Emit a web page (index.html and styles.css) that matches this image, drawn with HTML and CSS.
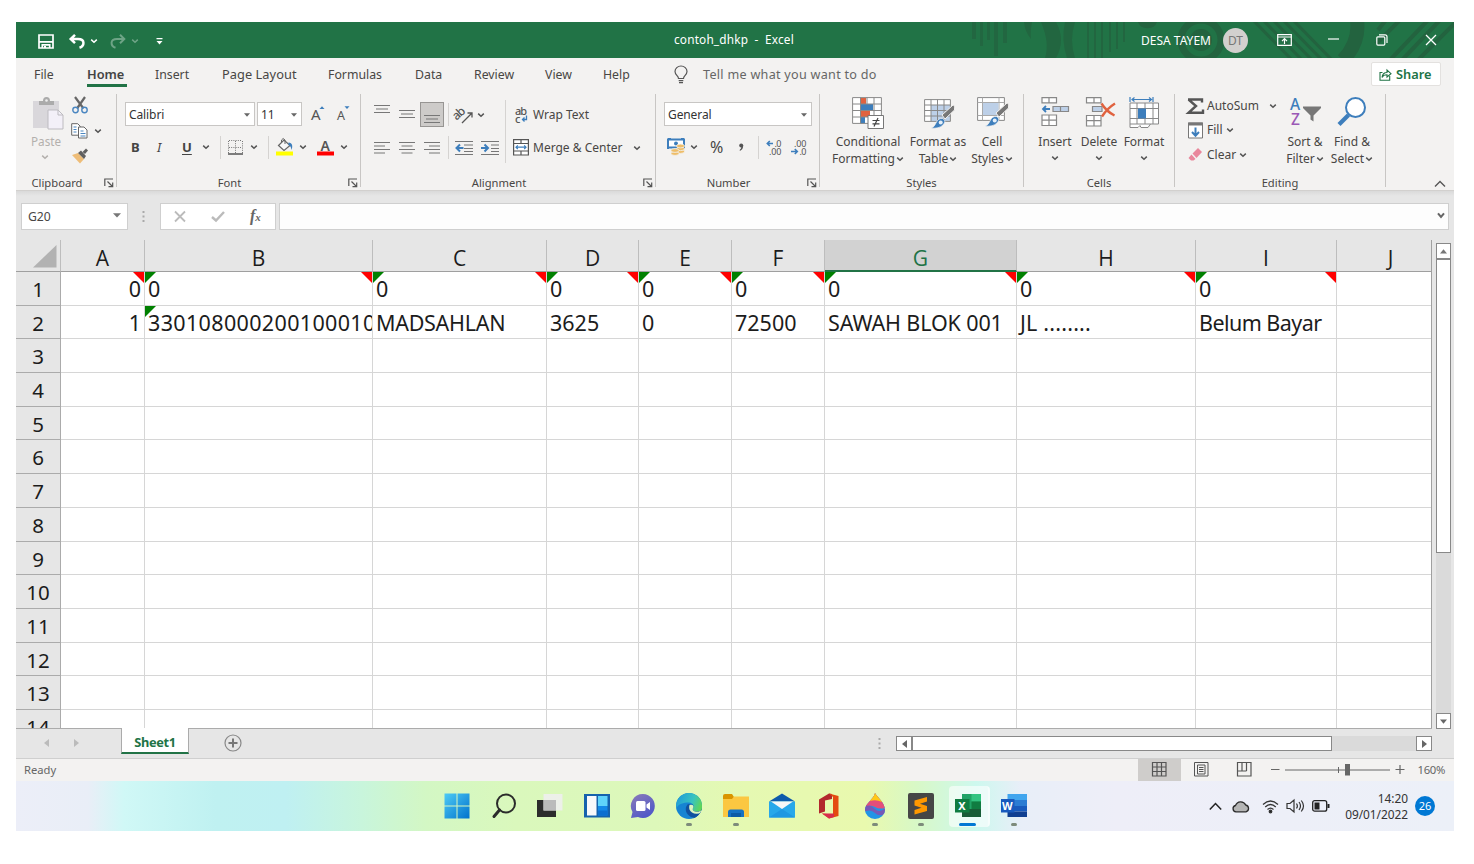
FILE: index.html
```html
<!DOCTYPE html>
<html lang="en">
<head>
<meta charset="utf-8">
<title>contoh_dhkp - Excel</title>
<link rel="stylesheet" href="styles.css">
</head>
<body>
<svg class="defs" aria-hidden="true">
  <symbol id="chev" viewBox="0 0 8 6"><path d="M1.2 1.6 4 4.2 6.8 1.6" fill="none" stroke="currentColor" stroke-width="1.5"/></symbol>
  <symbol id="tri" viewBox="0 0 6 4"><path d="M0 .3h6L3 3.7z" fill="currentColor"/></symbol>
  <symbol id="launch" viewBox="0 0 10 10"><path d="M.8 8V1H9M3.5 3.5 8.5 8.5M8.7 4.5v4.2H4.5" fill="none" stroke="#555" stroke-width="1.2"/></symbol>
</svg>
<div class="window">
  <header class="titlebar">
    <svg class="deco" viewBox="960 0 494 36" fill="#23633f">
      <path d="M972 0h4v17h-4zM980 0h3v24h-3zM987 0h3v18h-3zM994 0h4v34h-4zM1003 0h4v21h-4z" opacity=".7"/>
      <path d="M1024 0h8q-2 10-1 17-6-7-7-17zM1041 0h15q10 18 0 36h-11q5-15-4-36zM1065 0h10q-6 18 0 36h-8q-6-18-2-36zM1087 0h2v36h-2zM1094 0h2v36h-2zM1101 0h2v36h-2zM1109 0h2v30h-2zM1116 0h2v27h-2zM1123 0h2v20h-2z" opacity=".8"/>
      <path d="M1138 0h19a10 9 0 0 1-19 0z"/>
      <g fill="none" stroke="#23633f"><circle cx="1201" cy="18" r="20" stroke-width="7"/><circle cx="1201" cy="18" r="8" stroke-width="6"/>
      <path d="M1253-2 1292 38M1263-2 1302 38M1273-2 1312 38M1283-2 1322 38M1293-2 1332 38" stroke-width="3"/>
      <path d="M1357-2q3 22-14 40" stroke-width="14"/>
      <path d="M1378 8 1386-2M1376 22 1400-2M1390 38 1430-4M1402 38 1442-4M1418 38 1456 0" stroke-width="4"/></g>
    </svg>
    <div class="quick">
      <svg width="16" height="15" viewBox="0 0 16 15" fill="none" stroke="#fff" stroke-width="1.700"><path d="M1 1h14v13H1zM1 7.800h14M4.300 14v-3.200h7.400V14"/><path d="M7 12v2" stroke-width="2"/></svg>
      <svg width="16" height="15" viewBox="0 0 16 15" fill="none" stroke="#fff" stroke-width="2.500"><path d="M6 .8 1.700 5 6 9.200M1.700 5H9c7.500 0 6.500 7 1.500 8.800"/></svg>
      <svg class="chev light"><use href="#chev"/></svg>
      <svg class="dim" width="16" height="15" viewBox="0 0 16 15" fill="none" stroke="#fff" stroke-width="2"><path d="M10 .8 14.300 5 10 9.200M14.300 5H7c-7.500 0-6.500 7-1.500 8.800"/></svg>
      <svg class="chev light dim"><use href="#chev"/></svg>
      <svg width="7" height="7" viewBox="0 0 7 7" fill="#fff"><path d="M.5 0h6v1.300h-6zM.5 3h6l-3 3.500z"/></svg>
    </div>
    <div class="doc-title">contoh_dhkp&nbsp; -&nbsp; Excel</div>
    <div class="account">
      <span class="user">DESA TAYEM</span>
      <span class="avatar">DT</span>
      <svg width="15" height="12" viewBox="0 0 15 12" fill="none" stroke="#fff" stroke-width="1.200"><path d="M.7.700h13.600v10.600H.7zM.7 3h13.600M7.500 10V5M5 7.200 7.500 4.700 10 7.200"/></svg>
      <svg width="11" height="12" viewBox="0 0 11 12" stroke="#fff" stroke-width="1.200"><path d="M0 5h11"/></svg>
      <svg width="12" height="12" viewBox="0 0 12 12" fill="none" stroke="#fff" stroke-width="1.200"><rect x=".8" y="2.800" width="8" height="8.300" rx="1"/><path d="M3 .8h6q2 0 2 2V9"/></svg>
      <svg width="12" height="12" viewBox="0 0 12 12" stroke="#fff" stroke-width="1.300"><path d="M1 1 11 11M11 1 1 11"/></svg>
    </div>
  </header>

  <nav class="tabs">
    <span>File</span><span class="active">Home</span><span>Insert</span><span class="wide">Page Layout</span><span>Formulas</span><span>Data</span><span>Review</span><span>View</span><span>Help</span>
    <svg width="14" height="18" viewBox="0 0 14 18" fill="none" stroke="#555" stroke-width="1.200"><path d="M4.500 12.500c0-3-3.500-3.500-3.500-7a6 5.500 0 0 1 12 0c0 3.500-3.500 4-3.500 7zM4.700 14.700h4.600M5 16.700h4"/></svg>
    <span class="tell">Tell me what you want to do</span>
    <span class="share"><svg width="13" height="13" viewBox="0 0 13 13" fill="none" stroke="#217346" stroke-width="1.100"><path d="M3.500 4.500H1v7.800h9.700V8M3 9.500c.5-4 3-5 5-5V2l4 3.700L8 9V6.800c-2 0-4 .5-5 2.700z"/></svg>Share</span>
  </nav>

  <section class="ribbon">
    <div class="group g-clip">
      <div class="body">
        <div class="paste">
          <svg width="31" height="33" viewBox="0 0 31 33"><path d="M0 4h26v27H0z" fill="#d9d7db"/><path d="M6 8V4h4q0-4 3.500-4t3.500 4h4v4z" fill="#ababab"/><circle cx="13.500" cy="3.500" r="1.300" fill="#eee"/><path d="M15 13h10l5 5v14H15z" fill="#f3f0f8" stroke="#bdbbc0"/><path d="M25 13v5h5" fill="none" stroke="#bdbbc0"/></svg>
          <span>Paste</span><svg class="chev"><use href="#chev"/></svg>
        </div>
        <div class="clip-tools">
          <svg width="17" height="17" viewBox="0 0 17 17" fill="none"><path d="M3 0 11.500 11.500M13 0 5 11.500" stroke="#666" stroke-width="2.200"/><circle cx="3.500" cy="13" r="2.700" stroke="#4a86c0" stroke-width="1.400"/><circle cx="12.500" cy="13" r="2.700" stroke="#4a86c0" stroke-width="1.400"/></svg>
          <div class="pair"><svg width="17" height="16" viewBox="0 0 17 16" fill="#fff" stroke="#666"><path d="M.7.700h6l2.500 2.500v9H.7z"/><path d="M7.500 4h5.500l3 3v8H7.500z"/><path d="M2.500 4h3M2.500 6.500h3M2.500 9h3M9.500 8h3M9.500 10.500h5M9.500 13h5" stroke="#4a86c0"/></svg><svg class="chev"><use href="#chev"/></svg></div>
          <svg width="18" height="16" viewBox="0 0 18 16"><path d="M0 7 6 5l6 6-4 4.500z" fill="#eebd78"/><path d="M6 5 9 2.500 14 8l-2 3z" fill="#606060"/><path d="M10.500 4 14 .5l2 2L13 6z" fill="#606060"/></svg>
        </div>
      </div>
      <div class="caption"><span>Clipboard</span><svg><use href="#launch"/></svg></div>
    </div>

    <div class="group g-font">
      <div class="body">
        <div class="row1">
          <div class="combo">Calibri<svg class="tri"><use href="#tri"/></svg></div>
          <div class="combo size">11<svg class="tri"><use href="#tri"/></svg></div>
          <svg width="15" height="20" viewBox="0 0 15 20"><text x="0" y="17.500" font-size="15">A</text><path d="M8.500 7h5L11 4.200z" fill="#3d7ebc"/></svg>
          <svg width="15" height="20" viewBox="0 0 15 20"><text x="0" y="17.500" font-size="12.500">A</text><path d="M7.500 4.200h5L10 7z" fill="#3d7ebc"/></svg>
        </div>
        <div class="row2">
          <b>B</b><i class="ital">I</i><b class="under">U</b><svg class="chev"><use href="#chev"/></svg>
          <hr>
          <svg width="15" height="15" viewBox="0 0 15 15" fill="none" stroke="#777"><path d="M1 .5h13M.5 1v12M14.500 1v12M7.500 1v12M1 7.500h13" stroke-dasharray="1 1.200"/><path d="M0 14h15" stroke="#555" stroke-width="1.500"/></svg>
          <svg class="chev"><use href="#chev"/></svg>
          <hr>
          <svg width="18" height="18" viewBox="0 0 18 18"><path d="M2.500 7.500 8 2l6 5.500-6 5z" fill="#f8f8f8" stroke="#666" stroke-width="1.200"/><path d="M5.500 5V2q1.500-3 3.500 0v4" fill="none" stroke="#666"/><path d="M12.500 4.500c4 0 4.500 4 3 7.500-.5-3-1-4-3-5z" fill="#3d7ebc"/><path d="M0 13.500h17v4H0z" fill="#ff0"/></svg>
          <svg class="chev"><use href="#chev"/></svg>
          <svg width="18" height="22" viewBox="0 -2 18 22"><text x="3.500" y="12.700" font-size="14" font-weight="600">A</text><path d="M0 13.500h17v4H0z" fill="#f00"/></svg>
          <svg class="chev"><use href="#chev"/></svg>
        </div>
      </div>
      <div class="caption"><span>Font</span><svg><use href="#launch"/></svg></div>
    </div>

    <div class="group g-align">
      <div class="body">
        <div class="align-left">
          <div class="arow">
            <svg class="up" width="16" height="16" viewBox="0 0 16 16"><path class="ln" d="M0 2.500h16M2 6h12M0 9.500h16"/></svg>
            <svg width="16" height="16" viewBox="0 0 16 16"><path class="ln" d="M0 3.500h16M2 7h12M0 10.500h16"/></svg>
            <span class="pressed"><svg width="16" height="24" viewBox="0 0 16 24"><path class="ln" d="M0 12.500h16M2 16h12M0 19.500h16"/></svg></span>
            <hr>
            <svg width="19" height="18" viewBox="0 0 19 18"><text x="-1.500" y="11" font-size="12" font-weight="500" textLength="13" transform="rotate(-42 5 9)">ab</text><path d="M7 17 16.500 7.500M12.500 7h4.500v4.500" fill="none" stroke="#555" stroke-width="1.300"/></svg>
            <svg class="chev"><use href="#chev"/></svg>
          </div>
          <div class="arow">
            <svg width="16" height="16" viewBox="0 0 16 16"><path class="ln" d="M0 2.500h16M0 6h11M0 9.500h16M0 13h11"/></svg>
            <svg width="16" height="16" viewBox="0 0 16 16"><path class="ln" d="M0 2.500h16M2.500 6h11M0 9.500h16M2.500 13h11"/></svg>
            <svg class="right" width="16" height="16" viewBox="0 0 16 16"><path class="ln" d="M0 2.500h16M5 6h11M0 9.500h16M5 13h11"/></svg>
            <hr>
            <svg width="18" height="16" viewBox="0 0 18 16"><path class="ln" d="M0 1.500h18M9 5h9M9 8.500h9M9 11.500h9M0 14.500h18"/><path d="M8.500 8H1.500M5 4.500 1.500 8 5 11.500" fill="none" stroke="#3d7ebc" stroke-width="2"/></svg>
            <svg width="18" height="16" viewBox="0 0 18 16"><path class="ln" d="M0 1.500h18M10 5h8M10 8.500h8M10 11.500h8M0 14.500h18"/><path d="M0 8h7M3.500 4.500 7 8 3.500 11.500" fill="none" stroke="#3d7ebc" stroke-width="2"/></svg>
          </div>
        </div>
        <div class="align-right">
          <div class="wrap"><svg width="14" height="22" viewBox="0 -2 14 22"><text x="0" y="8.500" font-size="11" font-weight="500" textLength="12">ab</text><text x="0" y="17" font-size="11" font-weight="500">c</text><path d="M11.500 9.500v4H8M9.500 11.500 7.500 13.500 9.500 15.500" fill="none" stroke="#3d7ebc" stroke-width="1.300"/></svg><span>Wrap Text</span></div>
          <div class="wrap merge"><svg width="16" height="17" viewBox="0 0 16 17" fill="#fff" stroke="#555" stroke-width="1.200"><path d="M.6.600h14.800v15.400H.6zM.6 4.500h14.800M.6 12h14.800M8 .6v3.900M8 12v4"/><path d="M3 8.200h10M4.800 6.400 3 8.200l1.800 1.800M11.200 6.400 13 8.200 11.200 10" fill="none" stroke="#3d7ebc"/></svg><span>Merge &amp; Center</span><svg class="chev"><use href="#chev"/></svg></div>
        </div>
      </div>
      <div class="caption"><span>Alignment</span><svg><use href="#launch"/></svg></div>
    </div>

    <div class="group g-num">
      <div class="body">
        <div class="combo">General<svg class="tri"><use href="#tri"/></svg></div>
        <div class="row2">
          <svg width="18" height="18" viewBox="0 0 18 18"><path d="M1 1.500h16v8H1z" fill="#fff" stroke="#3d7ebc" stroke-width="2"/><circle cx="9" cy="5.500" r="2" fill="#3d7ebc"/><path d="M1 0h3v2H1zM14 0h3v2h-3zM0 8h2v3H0z" fill="#3d7ebc"/><g fill="#eebd68" stroke="#f3f2f1" stroke-width=".8"><ellipse cx="13.500" cy="13.500" rx="4" ry="1.900"/><ellipse cx="13.500" cy="10.700" rx="4" ry="1.900"/><ellipse cx="13.500" cy="8" rx="4" ry="1.900"/><ellipse cx="8" cy="15.500" rx="4" ry="1.900"/><ellipse cx="8" cy="12.500" rx="4" ry="1.900"/></g></svg>
          <svg class="chev"><use href="#chev"/></svg>
          <span class="pct">%</span>
          <svg width="7" height="9" viewBox="0 0 7 9" fill="#555"><circle cx="3.200" cy="2.500" r="2"/><path d="M5.200 2.500q0 4-3.400 5.500v-1.200q1.500-1 1.600-3z"/></svg>
          <hr>
          <svg width="17" height="20" viewBox="0 -2 17 20"><text x="8.500" y="7.500" font-size="9" textLength="7">.0</text><text x="3" y="15.700" font-size="9" textLength="12.500">.00</text><path d="M7 4.500H1.300M3.800 2 1.300 4.500 3.800 7" fill="none" stroke="#3d7ebc" stroke-width="1.600"/></svg>
          <svg width="17" height="20" viewBox="0 -2 17 20"><text x="3" y="7.500" font-size="9" textLength="12.500">.00</text><text x="8.500" y="15.700" font-size="9" textLength="7">.0</text><path d="M0 12.500h6M3.800 10l2.500 2.500L3.800 15" fill="none" stroke="#3d7ebc" stroke-width="1.600"/></svg>
        </div>
      </div>
      <div class="caption"><span>Number</span><svg><use href="#launch"/></svg></div>
    </div>

    <div class="group g-styles">
      <div class="body">
        <div class="big"><svg width="33" height="33" viewBox="0 0 33 33"><path d="M.6.600h28.800v25.800H.6z" fill="#fff"/><path d="M9 1h5v6H9zM9 13.500h9v6.500H9z" fill="#e0623f"/><path d="M9 7h12v6.500H9zM9 20h4v6.500H9z" fill="#3d7ebc"/><path d="M.6.600h28.800v25.800H.6zM.6 7h28.800M.6 13.500h28.800M.6 20h28.800M8.500.600v25.800M15 .600V7M22 .600v25.800" fill="none" stroke="#888"/><path d="M16 18.500h15.500v13H16z" fill="#fff" stroke="#777"/><path d="M20.500 23.500h7M20.500 26.800h7M26 21l-4 8.500" stroke="#444" stroke-width="1.200"/></svg><span>Conditional</span><span>Formatting<svg class="chev"><use href="#chev"/></svg></span></div>
        <div class="big"><svg width="33" height="33" viewBox="0 0 33 33"><path d="M2.600 2.600h25.800v21.800H2.600z" fill="#fff"/><path d="M9 8h19v16H9z" fill="#bdd0e8"/><path d="M2.600 2.600h25.800v21.800H2.600zM2.600 8h25.800M2.600 13.500h25.800M2.600 19h25.800M9 2.600v21.800M15.500 2.600v21.800M22 2.600v21.800" fill="none" stroke="#888"/><use href="#brush"/></svg><span>Format as</span><span>Table<svg class="chev"><use href="#chev"/></svg></span></div>
        <div class="big"><svg width="33" height="33" viewBox="0 0 33 33"><defs><g id="brush"><path d="M20 18 31 8q2 0 1.500 5L23 22z" fill="#777" stroke="#f3f2f1"/><path d="M9 31q3-.5 5-5 2-5 6.500-4.500Q25 23.500 21 28q-4 4-12 3z" fill="#3d7ebc" stroke="#f3f2f1" stroke-width=".7"/><circle cx="18.700" cy="25.500" r="2" fill="#e4eef8"/></g></defs><path d="M1.600.600h26.800v22.800H1.600z" fill="#fff" stroke="#888"/><path d="M1.600 5.500h26.800M1.600 18.500h26.800M6.500.600v22.800M23 .600v22.800" fill="none" stroke="#aaa"/><path d="M7 6h15.500v12H7z" fill="#bdd0e8"/><g transform="translate(0 -2)"><use href="#brush"/></g></svg><span>Cell</span><span>Styles<svg class="chev"><use href="#chev"/></svg></span></div>
      </div>
      <div class="caption"><span>Styles</span></div>
    </div>

    <div class="group g-cells">
      <div class="body">
        <div class="big"><svg width="30" height="33" viewBox="0 0 30 33" fill="#fff" stroke="#888" stroke-width="1.200"><path d="M2 .600h14.500v5.200H2zM9 .600v5.200M2 18h14.500v10.500H2zM9 18v10.500M2 23.200h14.500"/><path d="M13 9.500h15.500v5H13zM20.500 9.500v5" fill="#bdd0e8"/><path d="M10 12H3M6 9 3 12l3 3" fill="none" stroke="#3d7ebc" stroke-width="1.800"/></svg><span>Insert</span><svg class="chev"><use href="#chev"/></svg></div>
        <div class="big"><svg width="32" height="33" viewBox="0 0 32 33" fill="#fff" stroke="#888" stroke-width="1.200"><path d="M3.500.600H18v5.200H3.500zM11 .600v5.200M3.500 18.500H18V29H3.500zM11 18.500V29M3.500 23.700H18"/><path d="M9.500 9.500H19v5H9.500z" fill="#bdd0e8"/><path d="M18.500 6.500q5 8 13 12M32 6.500q-8 5-13 13" fill="none" stroke="#e0623f" stroke-width="2.400"/></svg><span>Delete</span><svg class="chev"><use href="#chev"/></svg></div>
        <div class="big"><svg width="31" height="33" viewBox="0 0 31 33" fill="#fff" stroke="#888"><path d="M1 27v3.500h8l2-2 1 2h7l2.500-3.500"/><path d="M1 6h28.500v21H1zM1 11.500h28.500M1 21.500h28.500M8 6v21M16 6v21M24 6v21"/><path d="M9 11.500h8v10H9z" fill="#3d7ebc" stroke="none"/><path d="M1 0v5M24 0v5M3 2.500h19M5.500.500 3 2.500l2.500 2M20 .500l2.500 2-2.500 2" fill="none" stroke="#3d7ebc" stroke-width="1.200"/></svg><span>Format</span><svg class="chev"><use href="#chev"/></svg></div>
      </div>
      <div class="caption"><span>Cells</span></div>
    </div>

    <div class="group g-edit">
      <div class="body">
        <div class="edit-list">
          <div><svg width="17" height="17" viewBox="0 0 17 17"><path d="M1 1.500h14v3M1.500 1.500 9 8 1.500 14.800H16v-3.300" fill="none" stroke="#555" stroke-width="2.400"/></svg><span>AutoSum</span><svg class="chev far"><use href="#chev"/></svg></div>
          <div><svg width="17" height="17" viewBox="0 0 17 17"><path d="M1.500 1h14v15h-14z" fill="#fff" stroke="#777"/><path d="M1 .5h15v3H1z" fill="#777"/><path d="M8.500 5.500v8M5 10l3.500 3.700L12 10" fill="none" stroke="#3d7ebc" stroke-width="2"/></svg><span>Fill</span><svg class="chev"><use href="#chev"/></svg></div>
          <div><svg width="17" height="17" viewBox="0 0 17 17"><path d="M5.500 7.500 11 2l4 4-5.500 6z" fill="#e9879c"/><path d="M4.500 8.500 8.500 13l-2 1.500H4L1.500 12z" fill="#e9879c"/></svg><span>Clear</span><svg class="chev"><use href="#chev"/></svg></div>
        </div>
        <div class="big"><svg class="sort" width="32" height="36" viewBox="0 -3 32 36"><text x="1" y="13" font-size="15.500">A</text><text x="2" y="28" font-size="15.500">Z</text><path d="M14 9.500h18v1.500l-7.500 7.500v6l-3-2v-4L14 11z" fill="#777"/></svg><span>Sort &amp;</span><span>Filter<svg class="chev"><use href="#chev"/></svg></span></div>
        <div class="big"><svg width="30" height="33" viewBox="0 0 30 33"><circle cx="18.500" cy="10.500" r="9.500" fill="#fff" stroke="#3d7ebc" stroke-width="2"/><path d="M11.500 18 2 27.500" stroke="#3d7ebc" stroke-width="4.200"/></svg><span>Find &amp;</span><span>Select<svg class="chev"><use href="#chev"/></svg></span></div>
      </div>
      <div class="caption"><span>Editing</span></div>
    </div>
    <svg class="collapse" width="12" height="8" viewBox="0 0 12 8"><path d="M1 6.500 6 1.500 11 6.500" fill="none" stroke="#555" stroke-width="1.400"/></svg>
  </section>

  <section class="formula">
    <div class="namebox">G20<svg width="8" height="5" viewBox="0 0 8 5"><path d="M0 .3h8L4 4.500z" fill="#777"/></svg></div>
    <svg class="dots" width="3" height="12" viewBox="0 0 3 12" fill="#aaa"><path d="M.5 0h2v2h-2zM.5 4.500h2v2h-2zM.5 9h2v2h-2z"/></svg>
    <div class="fx">
      <svg width="12" height="11" viewBox="0 0 12 11" stroke="#bbb" stroke-width="1.800"><path d="M1 .5 11 10.500M11 .5 1 10.500"/></svg>
      <svg width="14" height="11" viewBox="0 0 14 11" fill="none" stroke="#bbb" stroke-width="2.400"><path d="M1 6 5 9.500 13 1"/></svg>
      <span class="fn">f<small>x</small></span>
    </div>
    <div class="entry"><svg width="8" height="7" viewBox="0 0 8 7"><path d="M1 1.300 4 5 7 1.300" fill="none" stroke="#666" stroke-width="2"/></svg></div>
  </section>

  <section class="sheet">
    <div class="cells">
      <div class="r head"><b class="corner"><svg width="24" height="23" viewBox="0 0 24 23"><path d="M23.500 0v22.500H0z" fill="#b2b2b2"/></svg></b><b>A</b><b>B</b><b>C</b><b>D</b><b>E</b><b>F</b><b class="sel">G</b><b>H</b><b>I</b><b>J</b></div>
      <div class="r"><b>1</b><i class="num note">0</i><i class="err note">0</i><i class="err note">0</i><i class="err note">0</i><i class="err note">0</i><i class="err note">0</i><i class="err note">0</i><i class="err note">0</i><i class="err note">0</i><i></i></div>
      <div class="r"><b>2</b><i class="num">1</i><i class="err long">330108000200100010</i><i class="t-c">MADSAHLAN</i><i>3625</i><i>0</i><i>72500</i><i class="t-g">SAWAH BLOK 001</i><i class="t-h">JL ........</i><i class="t-i">Belum Bayar</i><i></i></div>
      <div class="r"><b>3</b><i></i><i></i><i></i><i></i><i></i><i></i><i></i><i></i><i></i><i></i></div>
      <div class="r"><b>4</b><i></i><i></i><i></i><i></i><i></i><i></i><i></i><i></i><i></i><i></i></div>
      <div class="r"><b>5</b><i></i><i></i><i></i><i></i><i></i><i></i><i></i><i></i><i></i><i></i></div>
      <div class="r"><b>6</b><i></i><i></i><i></i><i></i><i></i><i></i><i></i><i></i><i></i><i></i></div>
      <div class="r"><b>7</b><i></i><i></i><i></i><i></i><i></i><i></i><i></i><i></i><i></i><i></i></div>
      <div class="r"><b>8</b><i></i><i></i><i></i><i></i><i></i><i></i><i></i><i></i><i></i><i></i></div>
      <div class="r"><b>9</b><i></i><i></i><i></i><i></i><i></i><i></i><i></i><i></i><i></i><i></i></div>
      <div class="r"><b>10</b><i></i><i></i><i></i><i></i><i></i><i></i><i></i><i></i><i></i><i></i></div>
      <div class="r"><b>11</b><i></i><i></i><i></i><i></i><i></i><i></i><i></i><i></i><i></i><i></i></div>
      <div class="r"><b>12</b><i></i><i></i><i></i><i></i><i></i><i></i><i></i><i></i><i></i><i></i></div>
      <div class="r"><b>13</b><i></i><i></i><i></i><i></i><i></i><i></i><i></i><i></i><i></i><i></i></div>
      <div class="r"><b>14</b><i></i><i></i><i></i><i></i><i></i><i></i><i></i><i></i><i></i><i></i></div>
    </div>
    <div class="vscroll">
      <span class="btn"><svg width="7" height="5" viewBox="0 0 7 5"><path d="M0 4.500h7L3.500.300z" fill="#777"/></svg></span>
      <span class="thumb"></span><span class="track"></span>
      <span class="btn"><svg width="7" height="5" viewBox="0 0 7 5"><path d="M0 .5h7L3.500 4.700z" fill="#666"/></svg></span>
    </div>
  </section>

  <section class="sheetbar">
    <svg class="nav" width="5" height="8" viewBox="0 0 5 8"><path d="M5 0v8L0 4z" fill="#bbb"/></svg>
    <svg class="nav" width="5" height="8" viewBox="0 0 5 8"><path d="M0 0v8l5-4z" fill="#bbb"/></svg>
    <span class="sheet-tab">Sheet1</span>
    <svg class="add" width="18" height="18" viewBox="0 0 18 18" fill="none" stroke="#888"><circle cx="9" cy="9" r="8" stroke-width="1.200"/><path d="M9 4.500v9M4.500 9h9" stroke="#777" stroke-width="2"/></svg>
    <svg class="grip" width="3" height="12" viewBox="0 0 3 12" fill="#aaa"><path d="M.5 0h2v2h-2zM.5 4.500h2v2h-2zM.5 9h2v2h-2z"/></svg>
    <div class="hscroll">
      <span class="btn"><svg width="5" height="8" viewBox="0 0 5 8"><path d="M5 0v8L0 4z" fill="#666"/></svg></span>
      <span class="thumb"></span><span class="track"></span>
      <span class="btn"><svg width="5" height="8" viewBox="0 0 5 8"><path d="M0 0v8l5-4z" fill="#666"/></svg></span>
    </div>
  </section>

  <footer class="status">
    <span class="ready">Ready</span>
    <div class="view on"><svg width="15" height="15" viewBox="0 0 15 15" fill="none" stroke="#555"><path d="M.5.500h13.500v13.500H.5zM5 .5v13.500M9.500.500v13.500M.5 5h13.500M.5 9.500h13.500" stroke-width="1.200"/></svg></div>
    <div class="view"><svg width="15" height="15" viewBox="0 0 15 15" fill="none" stroke="#555"><path d="M.5.500h13.500v13.500H.5zM3.500 3h7.500v9H3.500zM5 5.500h4.500M5 7.500h4.500M5 9.500h4.500"/></svg></div>
    <div class="view"><svg width="15" height="15" viewBox="0 0 15 15" fill="none" stroke="#555"><path d="M.5.500h13.500v13.500H.5zM5 .5v8.500M9.500.500v8.500M.5 9h9" stroke-width="1.200"/></svg></div>
    <svg class="zoom" width="135" height="15" viewBox="0 0 135 15" stroke="#666" fill="none"><path d="M0 7.500h8.500M124.500 7.500h9M129 3v9" stroke-width="1.200"/><path d="M14 8h105M67.500 5v6"/><path d="M74 2h5v11.500h-5z" fill="#666" stroke="none"/></svg>
    <span class="pctz">160%</span>
  </footer>

  <footer class="taskbar">
    <div class="apps">
      <span class="app"><svg width="26" height="26" viewBox="0 0 26 26"><defs><linearGradient id="win" gradientUnits="userSpaceOnUse" x1="0" y1="0" x2="26" y2="26"><stop stop-color="#4fcdf6"/><stop offset="1" stop-color="#0070cc"/></linearGradient></defs><path d="M.5.500h12v12H.5zM13.500.500h12v12h-12zM.5 13.500h12v12H.5zM13.500 13.500h12v12h-12z" fill="url(#win)"/></svg></span>
      <span class="app"><svg width="26" height="26" viewBox="0 0 26 26" fill="none" stroke="#2b2b2b"><circle cx="15" cy="10.500" r="9" stroke-width="2"/><path d="M8.500 17 3 23.500" stroke-width="3" stroke-linecap="round"/></svg></span>
      <span class="app"><svg width="26" height="26" viewBox="0 0 26 26"><path d="M0 7h19v17H0z" fill="#2c2c2c"/><path d="M6.500 1h19v16.500h-19z" fill="#eee" opacity=".9"/><path d="M6.500 7H19v10.500H6.500z" fill="#bbb"/></svg></span>
      <span class="app"><svg width="26" height="26" viewBox="0 0 26 26"><path d="M0 1h26v23.500H0z" fill="#1562ad"/><path d="M3 3h9.500v19.500H3z" fill="#f8f8fb"/><path d="M14 3h9.500v10H14z" fill="#5fd4fb"/><path d="M14 13h9.500v9.500H14z" fill="#1389e8"/><path d="M14 17.500h9.500v5H14z" fill="#0c6fd0"/></svg></span>
      <span class="app"><svg width="26" height="26" viewBox="0 0 26 26"><defs><linearGradient id="chat" x2=".6" y2="1"><stop stop-color="#8b7bb8"/><stop offset="1" stop-color="#5058c8"/></linearGradient></defs><path d="M13 1a12 12 0 1 1-5 23l-7 1 1.500-6A12 12 0 0 1 13 1z" fill="url(#chat)"/><rect x="6" y="8" width="9.500" height="10" rx="1.500" fill="#fff"/><path d="M16.500 11.500 20 9v8l-3.500-2.500z" fill="#fff"/></svg></span>
      <span class="app run"><svg width="26" height="26" viewBox="0 0 26 26"><defs><linearGradient id="e1" y1=".3" x2="1" y2=".6"><stop stop-color="#1f9bd8"/><stop offset=".6" stop-color="#38c3c0"/><stop offset="1" stop-color="#62d84e"/></linearGradient><clipPath id="disc"><circle cx="13" cy="13" r="13"/></clipPath></defs><g clip-path="url(#disc)"><path d="M0 0h26v26H0z" fill="#1684d2"/><path d="M12 11c-5 5-1 13 6 13.500L16 27H30V17z" fill="#1052a0"/><path d="M0 12a13 13 0 0 1 27 1c0 5-4 6.500-8 5.500-3-.7-3-2-2-3.500 2-4-2-6-6-5.500C5 10 2 12 .5 15z" fill="url(#e1)"/><path d="M13.500 11.500c3-1 5 1.500 3.500 3.500-1 2 .5 3.300 3 3.700 2 .3 4-.3 6-1.700v3.500l-3 1.500c-6 2-12-1-12-6 0-2 1-4 2.500-4.500z" fill="#1052a0"/><path d="M13.500 12c3-1 5 1 3.500 3-1 2 .5 3.300 3 3.700 2 .3 4-.3 6-1.700v2.500q-6 2.500-10 0-4-3-2.500-7.500z" fill="#daf5c0"/></g></svg></span>
      <span class="app run"><svg width="26" height="26" viewBox="0 0 26 26"><path d="M0 3q0-2 2-2h7l2 3v4H0z" fill="#d99500"/><path d="M0 6h9l2-2.500h15V24H0z" fill="#fbc741"/><path d="M5 24v-5q0-2.500 2.500-2.500h11q2.500 0 2.500 2.500v5z" fill="#1572c4"/><path d="M8 20h10v4H8z" fill="#0c5ba6"/></svg></span>
      <span class="app"><svg width="26" height="26" viewBox="0 0 26 26"><path d="M0 8.500 13 .5l13 8z" fill="#0e5bab"/><path d="M0 8.500h26V24.500H0z" fill="#28a8ea"/><path d="M2 8.500h22L13 16z" fill="#f7f7f7"/><path d="M0 24.500 13 16l13 8.500z" fill="#1f98e2"/></svg></span>
      <span class="app"><svg width="26" height="26" viewBox="0 0 26 26"><path d="M3 6.500 13 .500l3 .500v5L9 7.500v11l-6 2z" fill="#b3282d"/><path d="M13 .5 22.500 3v20L13 25.500 6 20.500l11 1V4z" fill="#e44a10"/><path d="M6 20.500 13 25.500l5-1.500v-3.500z" fill="#d82c4c"/></svg></span>
      <span class="app run"><svg width="26" height="26" viewBox="0 0 26 26"><defs><clipPath id="drop"><path d="M13 0c3 5 10 10 10 17a10 9 0 0 1-20 0C3 10 12 6 13 0z"/></clipPath></defs><g clip-path="url(#drop)"><path d="M0 0h26v26H0z" fill="#2294e6"/><path d="M0 12q8-1 13 4t13-3v6q-8 6-13 1T0 20z" fill="#7659b8"/><path d="M0 0h26v14q-8 3-13 0T0 14z" fill="#e44e79"/><path d="M8 0h12v9q-6-3-12-1z" fill="#ffc917"/></g></svg></span>
      <span class="app run"><svg width="26" height="26" viewBox="0 0 26 26"><rect width="26" height="26" rx="2" fill="#464646"/><path d="M6.500 7.500 19 4v4.500l-7 2.300 7 2.200v5L6.500 21.500v-4.500l7-2.300-7-2.200z" fill="#ff9800"/></svg></span>
      <span class="app cur"><svg width="26" height="26" viewBox="0 0 26 26"><path d="M7 1h19v23H7z" fill="#21a366"/><path d="M16.500 1H26v7.500h-9.500z" fill="#33c481"/><path d="M16.500 8.500H26V16h-9.500z" fill="#107c41"/><path d="M7 16h19v8H7z" fill="#185c37"/><rect y="6" width="14.500" height="13.500" fill="#107c41"/><text class="logo" x="3.300" y="16.700">X</text></svg></span>
      <span class="app run"><svg width="26" height="26" viewBox="0 0 26 26"><path d="M6.500 1H26v6H6.500z" fill="#41a5ee"/><path d="M6.500 7H26v6H6.500z" fill="#2b7cd3"/><path d="M6.500 13H26v5.500H6.500z" fill="#185abd"/><path d="M6.500 18.500H26V24H6.500z" fill="#103f91"/><rect y="6" width="13.500" height="13.500" fill="#185abd"/><text class="logo" x="1" y="16.700">W</text></svg></span>
    </div>
    <div class="tray">
      <svg width="13" height="10" viewBox="0 0 13 10"><path d="M.8 8.500 6.500 2.500l5.700 6" fill="none" stroke="#222" stroke-width="1.500"/></svg>
      <svg width="18" height="14" viewBox="0 0 18 14"><path d="M4 12.800a3.200 3.200 0 0 1-.5-6.300A5.500 5.500 0 0 1 13.700 6a3.500 3.500 0 0 1 .3 6.800z" fill="#b5b5b5" stroke="#2b2b2b" stroke-width="1.300"/></svg>
      <svg width="17" height="15" viewBox="0 0 17 15" fill="none" stroke="#333" stroke-width="1.200"><path d="M1 5.500q7.500-7 15 0M3.200 8q5.300-5 10.600 0M5.500 10.500q3-2.800 6 0"/><circle cx="8.500" cy="12.500" r="1.300" fill="#222"/></svg>
      <svg width="19" height="16" viewBox="0 0 19 16" fill="none" stroke="#333" stroke-width="1.200"><path d="M1 5.500h3L8 2v12l-4-3.500H1zM10.500 5.500q1.800 2.500 0 5M13 4q3 4 0 8M15.300 2.500q4.400 5.500 0 11"/></svg>
      <svg width="18" height="12" viewBox="0 0 18 12"><rect x=".7" y=".7" width="14" height="10.500" rx="2" fill="none" stroke="#222" stroke-width="1.300"/><path d="M2.500 2.500h5v7h-5zM15.500 4h2v4h-2z" fill="#222"/></svg>
      <div class="clock"><span>14:20</span><span>09/01/2022</span></div>
      <span class="badge">26</span>
    </div>
  </footer>
</div>
</body>
</html>
```
FILE: styles.css
```css
* { box-sizing: border-box; }
body { margin: 0; background: #fff; font-family: "Noto Sans", "Open Sans", sans-serif; font-size: 12px; color: #484644; overflow: hidden; }
svg { display: block; flex: none; overflow: visible; }
svg text { fill: #555; }
.defs { position: absolute; width: 0; height: 0; overflow: hidden; }
.window { width: 1438px; height: 809px; margin: 22px 0 0 16px; display: flex; flex-direction: column; white-space: nowrap; line-height: 16px; }
.chev { width: 8px; height: 6px; color: #555; }
.light { color: #fff; }
.dim { opacity: .35; }
hr { margin: 0; border: 0; width: 1px; height: 23px; background: #d5d3d1; }

/* Title bar */
.titlebar { position: relative; height: 36px; background: #217346; color: #fff; display: grid; grid-template-columns: 658px 467px 1fr; align-items: center; }
.deco { position: absolute; right: 0; top: 0; width: 494px; height: 36px; overflow: hidden; }
.quick { display: grid; grid-template-columns: 31px 21px 20px 21px 25px 7px; align-items: center; padding-left: 22px; padding-top: 2px; }
.doc-title { font-size: 11.8px; letter-spacing: .18px; padding-bottom: 2px; }
.account { position: relative; display: grid; grid-template-columns: 82px 54px 51px 48px 49px 12px; align-items: center; padding-top: 1px; }
.account > svg { margin-top: -2px; }
.user { font-size: 12px; margin-right: 12px; }
.avatar { width: 25px; height: 25px; border-radius: 50%; background: #d2d0ce; color: #777; font-size: 12px; line-height: 25px; text-align: center; }

/* Tabs */
.tabs { height: 33px; flex: none; background: #f3f2f1; display: grid; grid-template-columns: 53px 68px 67px 106px 87px 59px 71px 58px 71px 29px 668px 70px; padding-left: 18px; align-items: start; padding-top: 4px; font-size: 12.3px; }
.tabs > span { line-height: 25px; height: 25px; justify-self: start; }
.tabs > svg { margin-top: 4px; }
.tabs .wide { font-size: 12.8px; letter-spacing: .05px; }
.tabs .active { font-weight: 600; color: #444; border-bottom: 3px solid #217346; line-height: 25px; font-size: 12.8px; width: 40px; }
.tabs .tell { color: #666; font-size: 12.6px; letter-spacing: .28px; }
.tabs .share { width: 70px; height: 24px; background: #fff; border: 1px solid #e3e1df; border-radius: 2px; color: #217346; font-weight: 600; font-size: 12.8px; display: flex; align-items: center; gap: 4px; padding-left: 7px; line-height: 22px; }

/* Ribbon */
.ribbon { height: 100px; flex: none; background: #f3f2f1; border-bottom: 1px solid #d2d0ce; display: flex; }
.group { height: 93px; margin-top: 3px; border-right: 1px solid #c8c6c4; display: flex; flex-direction: column; }
.body { height: 80px; flex: none; }
.caption { display: flex; align-items: center; font-size: 11.2px; line-height: 17px; }
.caption span { flex: 1; text-align: center; }
.caption svg { width: 10px; height: 10px; margin-right: 2px; }
.caption span:not(:last-child) { padding-right: 6px; }
.combo { height: 24px; background: #fff; border: 1px solid #c8c6c4; display: flex; align-items: center; justify-content: space-between; padding: 1px 4px 0 3px; font-size: 12px; color: #333; letter-spacing: -.1px; }
.tri { width: 6px; height: 4px; color: #666; }
.g-clip { width: 101px; }
.g-clip .body { display: flex; padding-left: 15px; }
.paste { width: 40px; color: #b3b0ad; display: flex; flex-direction: column; padding-top: 3px; }
.paste svg:first-child { margin-left: 2px; }
.paste span { margin-top: 3px; line-height: 17px; font-size: 11.7px; }
.paste .chev { margin: 4px 0 0 10px; color: #b3b0ad; }
.clip-tools { padding-top: 3px; display: flex; flex-direction: column; gap: 9px; }
.clip-tools > svg { margin-left: 1px; }
.pair { display: flex; align-items: center; gap: 6px; }
.g-font { width: 244px; }
.g-font .body { padding: 8px 0 0 8px; }
.row1 { display: grid; grid-template-columns: 132px 54px 26px 20px; height: 24px; }
.row1 .combo { width: 130px; }
.row1 .size { width: 45px; }
.g-font .row2 { display: grid; grid-template-columns: 26px 25px 20px 18px 8px 22px 18px 8px 23px 18px 23px 8px; height: 24px; margin-top: 9px; padding-left: 6px; align-items: center; font-size: 13px; color: #444; }
.ital { font-family: "Noto Sans", serif; }
.under { text-decoration: underline; text-underline-offset: 2px; }
.ln { fill: none; stroke: #777; stroke-width: 1.2; }
.g-align { width: 295px; }
.g-align .body { display: flex; padding-left: 13px; }
.align-left { width: 132px; margin-top: 6px; border-right: 1px solid #d5d3d1; height: 63px; }
.arow { display: grid; grid-template-columns: 25px 21px 28px 7px 26px 18px; height: 25px; align-items: center; margin-top: 2px; }
.arow + .arow { margin-top: 8px; }
.arow .up { margin-top: -7px; }
.arow .right { margin-left: 4px; }
.arow svg:nth-child(6).chev { margin-left: -4px; }
.pressed { width: 24px; height: 25px; background: #cdcbc9; border: 1px solid #979593; display: flex; justify-content: center; }
.align-right { padding: 8px 0 0 7px; }
.wrap { display: grid; grid-template-columns: 20px 100px 8px; height: 25px; align-items: center; font-size: 12px; }
.wrap:first-child svg { margin-left: 2px; }
.merge { margin-top: 8px; }
.g-num { width: 164px; }
.g-num .body { padding: 8px 0 0 8px; }
.g-num .combo { width: 148px; }
.g-num .row2 { display: grid; grid-template-columns: 23px 20px 28px 20px 8px 25px 17px; height: 24px; margin-top: 9px; padding-left: 3px; align-items: center; }
.pct { font-size: 16px; }
.g-styles { width: 204px; }
.g-styles .body { display: grid; grid-template-columns: 76px 64px 44px; padding-left: 10px; }
.big { display: flex; flex-direction: column; align-items: center; padding-top: 3px; }
.big > svg:first-child { margin-bottom: 4px; }
.big .sort { margin-top: -3px; }
.big span { display: flex; align-items: center; gap: 1px; line-height: 16.5px; font-size: 12px; }
.big > .chev { margin-top: 4px; }
.g-cells { width: 151px; }
.g-cells .body { display: grid; grid-template-columns: 44px 44px 46px; padding-left: 9px; }
.g-edit { width: 211px; }
.g-edit .body { display: grid; grid-template-columns: 95px 46px 48px; padding-left: 12px; }
.edit-list { font-size: 12px; }
.edit-list div { display: flex; align-items: center; height: 24.3px; }
.edit-list span { margin: 0 3px 0 3px; }
.edit-list .far { margin-left: 7px; }
.sort text:nth-of-type(1) { fill: #3d7ebc; font-weight: 500; }
.sort text:nth-of-type(2) { fill: #9b59b6; font-weight: 500; }
.collapse { margin: 89px 0 0 48px; }

/* Formula bar */
.formula { height: 49px; flex: none; background: linear-gradient(#dadada, #e6e6e6 5px); display: flex; padding: 12px 5px 0; align-items: flex-start; }
.namebox { width: 107px; height: 27px; background: #fff; border: 1px solid #cfcfcf; display: flex; align-items: center; justify-content: space-between; padding: 0 6px; font-size: 12.2px; }
.namebox svg { margin-bottom: 3px; }
.dots { margin: 8px 15px 0 14px; }
.fx { width: 116px; height: 27px; background: #fff; border: 1px solid #cfcfcf; display: grid; grid-template-columns: 37px 39px 20px; align-items: center; padding-left: 13px; }
.fn { font: italic bold 16px/20px "Liberation Serif", serif; color: #666; }
.fn small { font-size: 11px; }
.entry { flex: 1; margin-left: 3px; height: 27px; background: #fdfdfd; border: 1px solid #cfcfcf; display: flex; justify-content: flex-end; align-items: center; padding: 0 3px 2px 0; }

/* Worksheet */
.sheet { height: 488px; flex: none; background: #e6e6e6; display: flex; }
.cells { width: 1416px; height: 488px; overflow: hidden; background: #fff; border-right: 1px solid #a0a0a0; }
.r { display: grid; grid-template-columns: 45px 84px 228px 174px 92px 93px 93px 192px 179px 141px 95px; grid-template-rows: 100%; height: 33.7px; font-size: 21.5px; line-height: 34px; color: #1c1c1c; }
.r > * { font-style: normal; font-weight: 400; border-right: 1px solid #d6d6d6; border-bottom: 1px solid #d6d6d6; }
.r > i { padding-left: 3px; position: relative; overflow: hidden; }
.r > b { background: #e6e6e6; text-align: center; font-size: 20.5px; border-color: #ababab; }
.r > i:last-child { border-right: 0; }
.head { height: 32px; line-height: 36px; font-family: "Open Sans", "Noto Sans", sans-serif; }
.head > b { border-right-color: #bdbdbd; border-bottom: 1px solid #9f9f9f; font-size: 21px; }
.head > b:last-child { border-right: 0; padding-left: 12px; }
.head .sel { background: #d2d2d2; color: #217346; border-bottom: 2px solid #217346; }
.corner svg { margin: 5px 0 0 17px; }
.r .num { text-align: right; padding-right: 3px; }
.err::before { content: ""; position: absolute; left: 0; top: 0; border-top: 11px solid #008000; border-right: 11px solid transparent; }
.note::after { content: ""; position: absolute; right: 0; top: 0; border-top: 11px solid #f00; border-left: 11px solid transparent; }
.r .long { letter-spacing: .35px; }
.t-c { letter-spacing: -.28px; }
.t-g { letter-spacing: -.12px; }
.t-h { letter-spacing: .2px; }
.t-i { letter-spacing: -.55px; }
.vscroll { width: 15px; margin: 3px 0 -1px 4px; display: flex; flex-direction: column; position: relative; }
.btn { width: 15px; height: 16px; background: #fff; border: 1px solid #888; display: flex; align-items: center; justify-content: center; flex: none; }
.vscroll .thumb { height: 294px; background: #fff; border: 1px solid #888; }
.vscroll .track { flex: 1; background: #dadada; }

/* Sheet tabs */
.sheetbar { height: 30px; flex: none; background: linear-gradient(#ababab, #ababab) 0 0 / 1416px 1px no-repeat #e6e6e6; display: flex; align-items: flex-start; padding-left: 28px; }
.nav { margin: 11px 25px 0 0; }
.sheet-tab { width: 68px; height: 26px; margin: 0 0 0 17px; background: #fff; border: 1px solid #ababab; border-top: 0; border-bottom: 2px solid #217346; color: #217346; font-weight: 700; font-size: 12.8px; letter-spacing: -.3px; line-height: 28px; text-align: center; }
.add { margin: 6px 0 0 35px; }
.grip { margin: 10px 0 0 636px; }
.hscroll { display: flex; width: 536px; margin: 8px 0 0 15px; height: 15px; }
.hscroll .btn { width: 16px; height: 15px; }
.hscroll .thumb { width: 420px; background: #fff; border: 1px solid #888; }
.hscroll .track { flex: 1; background: #dadada; }

/* Status bar */
.status { height: 23px; flex: none; background: #f3f2f1; border-top: 1px solid #cfcfcf; display: flex; align-items: center; }
.ready { width: 1122px; padding-left: 8px; font-size: 11.2px; color: #666; }
.view { width: 42.5px; height: 22px; display: flex; align-items: center; justify-content: center; }
.view svg { margin-top: -2px; }
.on { background: #cfcdcb; }
.zoom { margin-left: 5px; margin-top: -1px; }
.pctz { margin-left: 12px; font-size: 11.3px; letter-spacing: -.3px; color: #666; }

/* Taskbar */
.taskbar { height: 50px; flex: none; display: flex; background: linear-gradient(90deg, #eceef8 0, #e9eef7 72px, #d0f8f6 108px, #bff1f1 200px, #bff0f2 270px, #c8f5dc 345px, #d3f7c4 410px, #daf8bc 500px, #ddf8ba 640px, #e5f9b2 730px, #e9f9ae 850px, #d8f8c6 900px, #cdf8ee 960px, #e8eef8 1005px, #eeeef8 1100px, #ecf0f8 100%); }
.apps { display: grid; grid-template-columns: repeat(13, 46.4px); margin-left: 418.3px; width: 603.2px; }
.app { height: 50px; display: flex; justify-content: center; align-items: center; position: relative; }
.run::after, .cur::after { content: ""; position: absolute; bottom: 5px; width: 6px; height: 3px; border-radius: 2px; background: #7d8b7b; }
.cur::before { content: ""; position: absolute; left: 4px; top: 5px; width: 39px; height: 41px; border-radius: 4px; background: rgba(255,255,255,.6); border-right: 2px solid rgba(255,255,255,.4); }
.cur::after { width: 17px; background: #0078d4; }
.cur svg { position: relative; }
svg .logo { fill: #fff; font-weight: 700; font-size: 11px; }
.tray { display: grid; grid-template-columns: 23px 30px 24px 26px 32px 64px 20px; align-items: center; margin-left: 171.500px; }
.clock { display: flex; flex-direction: column; text-align: right; line-height: 16.5px; color: #333; font-size: 11.9px; letter-spacing: -.05px; }
.badge { width: 20px; height: 20px; margin-left: 7px; border-radius: 50%; background: #0078d4; color: #fff; font-size: 11px; line-height: 20px; text-align: center; }
```
